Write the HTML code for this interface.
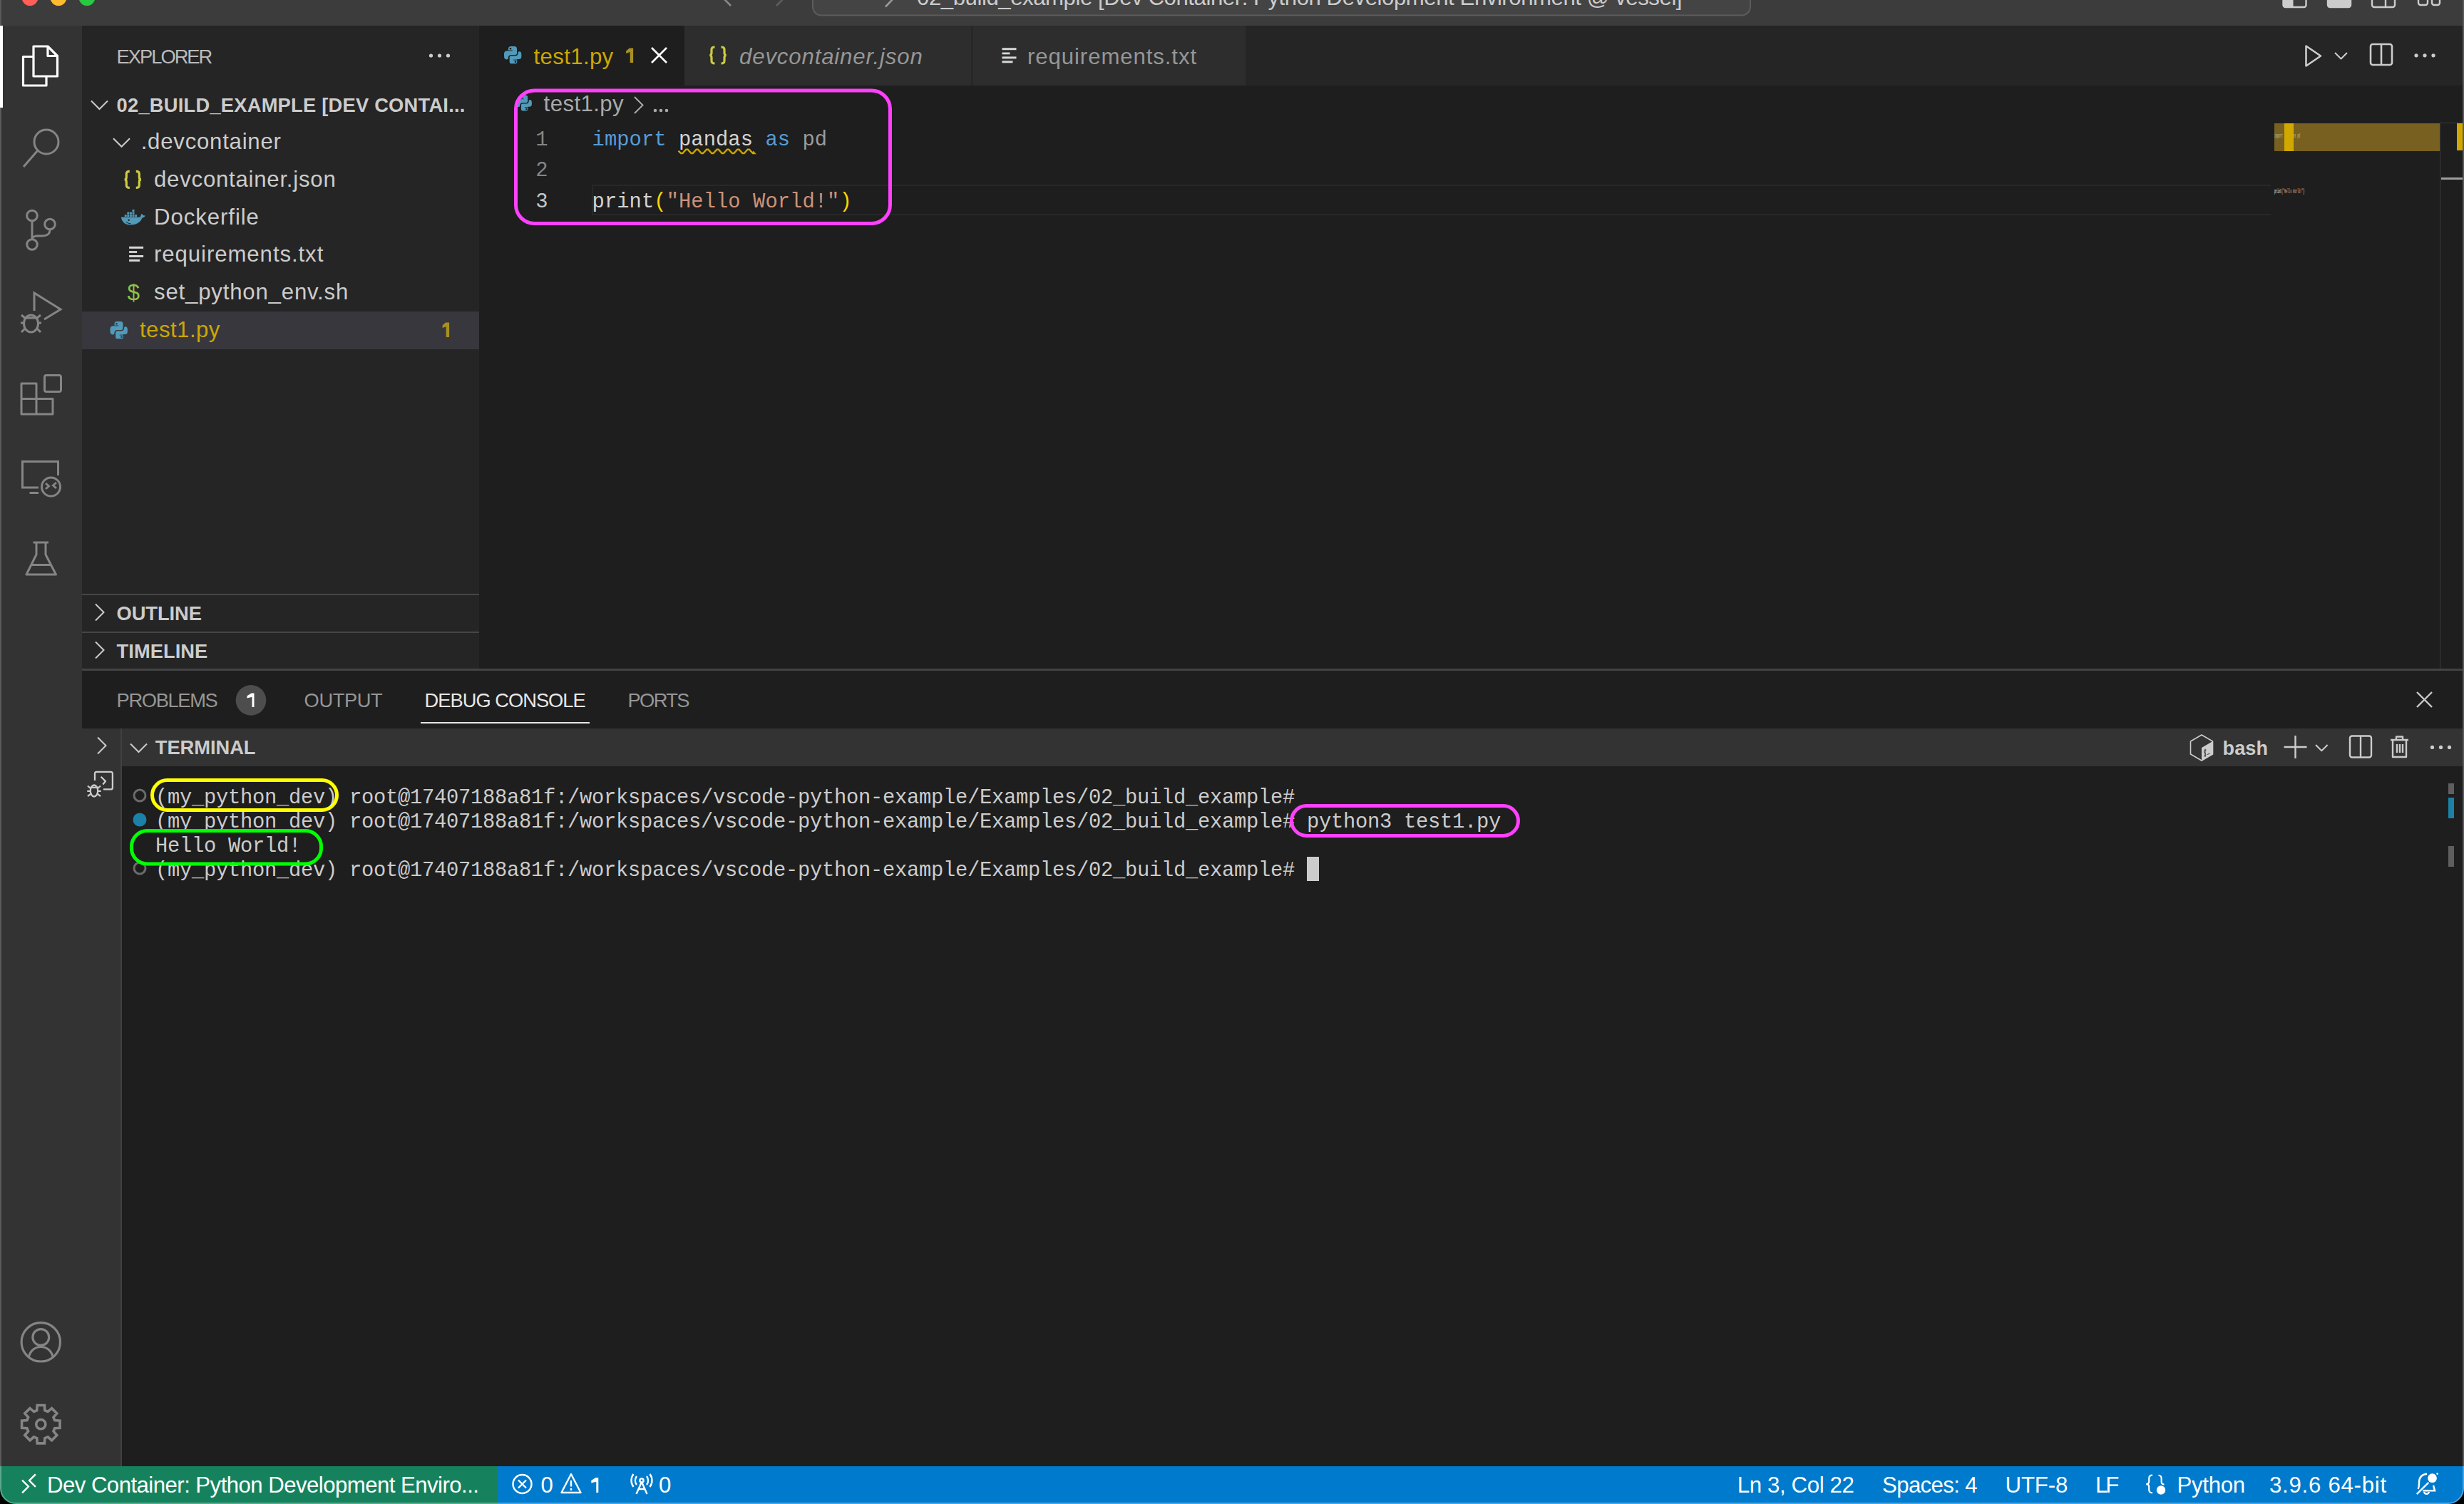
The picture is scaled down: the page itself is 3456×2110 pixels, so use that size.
<!DOCTYPE html>
<html><head><meta charset="utf-8"><style>
html,body{margin:0;padding:0;}
body{width:3456px;height:2110px;overflow:hidden;position:relative;background:#1e1e1e;font-family:'Liberation Sans', sans-serif;}
svg{position:absolute;left:0;top:0;overflow:visible}
</style></head><body>
<div style="position:absolute;left:0px;top:0px;width:3456.00px;height:36.00px;background:#3c3c3c;"></div>
<div style="position:absolute;left:0px;top:36px;width:115.00px;height:2021.20px;background:#333333;"></div>
<div style="position:absolute;left:115px;top:36px;width:557.00px;height:902.40px;background:#252526;"></div>
<div style="position:absolute;left:672px;top:36px;width:2784.00px;height:84.00px;background:#252526;"></div>
<div style="position:absolute;left:672px;top:36px;width:288.00px;height:84.00px;background:#1e1e1e;"></div>
<div style="position:absolute;left:960px;top:36px;width:401.60px;height:84.00px;background:#2d2d2d;"></div>
<div style="position:absolute;left:1363.6px;top:36px;width:383.40px;height:84.00px;background:#2d2d2d;"></div>
<div style="position:absolute;left:672px;top:120px;width:2784.00px;height:818.40px;background:#1e1e1e;"></div>
<div style="position:absolute;left:115px;top:938.4px;width:3341.00px;height:1118.80px;background:#1e1e1e;"></div>
<div style="position:absolute;left:115px;top:938.4px;width:3341.00px;height:2.40px;background:#434343;"></div>
<div style="position:absolute;left:0px;top:2057.2px;width:3456.00px;height:52.80px;background:#007acc;"></div>
<div style="position:absolute;left:0px;top:2057.2px;width:697.00px;height:52.80px;background:#16825d;"></div>
<div style="position:absolute;left:115px;top:437px;width:557.00px;height:52.80px;background:#37373d;"></div>
<div style="position:absolute;left:115px;top:833px;width:557.00px;height:2.40px;background:#464646;"></div>
<div style="position:absolute;left:115px;top:885.8px;width:557.00px;height:2.40px;background:#464646;"></div>
<div style="position:absolute;left:830px;top:259.2px;width:2370.00px;height:43.20px;background:transparent;box-sizing:border-box;border:2.4px solid #282828;"></div>
<div style="position:absolute;left:3185px;top:120px;width:237.00px;height:818.40px;background:#1e1e1e;"></div>
<div style="position:absolute;left:3190px;top:173.3px;width:232.00px;height:38.30px;background:#776020;"></div>
<div style="position:absolute;left:3204px;top:173.3px;width:12.50px;height:38.30px;background:#d1a800;"></div>
<div style="position:absolute;left:3422px;top:173px;width:1.30px;height:765.40px;background:#393939;"></div>
<div style="position:absolute;left:3422px;top:172.2px;width:34.00px;height:1.20px;background:#393939;"></div>
<div style="position:absolute;left:3446px;top:173.3px;width:10.00px;height:37.40px;background:#d1a800;"></div>
<div style="position:absolute;left:3424px;top:248.5px;width:32.00px;height:3.50px;background:#9e9e9e;"></div>
<div style="position:absolute;left:590px;top:1012.6px;width:237.00px;height:2.40px;background:#e7e7e7;"></div>
<div style="position:absolute;left:115px;top:1022.4px;width:3341.00px;height:52.40px;background:#333333;"></div>
<div style="position:absolute;left:115px;top:1074.8px;width:54.00px;height:982.40px;background:#333333;"></div>
<div style="position:absolute;left:169px;top:1022.4px;width:2.40px;height:1034.80px;background:#414141;"></div>
<div style="position:absolute;left:1833px;top:1202px;width:17.00px;height:34.00px;background:#cccccc;"></div>
<div style="position:absolute;left:3434px;top:1098.7px;width:8.00px;height:15.30px;background:#5f5f5f;"></div>
<div style="position:absolute;left:3434px;top:1119px;width:8.00px;height:29.00px;background:#1b81a8;"></div>
<div style="position:absolute;left:3434px;top:1187px;width:8.00px;height:29.00px;background:#5f5f5f;"></div>
<svg width="3456" height="2110" viewBox="0 0 3456 2110">
<circle cx="42" cy="-3.5" r="11.5" fill="#ff5f57"/>
<circle cx="82" cy="-3.5" r="11.5" fill="#febc2e"/>
<circle cx="122" cy="-3.5" r="11.5" fill="#28c840"/>
<path d="M1025 -12 L1015 -2 L1025 8" fill="none" stroke="#8a8a8a" stroke-width="2.6"/>
<path d="M1089 8 L1099 -2 L1089 -12" fill="none" stroke="#5e5e5e" stroke-width="2.6"/>
<rect x="1140" y="-30" width="1315" height="51.5" rx="12" fill="#444444" stroke="#5c5c5c" stroke-width="2"/>
<path d="M1242 9.5 L1252 -1" stroke="#9a9a9a" stroke-width="2.6"/>
<g fill="none" stroke="#cccccc" stroke-width="2.4"><rect x="3202.5" y="-20" width="32" height="30" rx="3"/><rect x="3265" y="-20" width="32" height="30" rx="3" fill="#cccccc"/><rect x="3327" y="-20" width="32" height="30" rx="3"/><path d="M3346 -20 V10"/><rect x="3392" y="-20" width="13" height="27" rx="3"/><rect x="3411" y="-20" width="11" height="27" rx="3"/></g>
<rect x="3202.5" y="-20" width="14" height="30" fill="#cccccc"/>
<g fill="none" stroke="#ffffff" stroke-width="3.2" stroke-linejoin="round"><path d="M46.5 79.5 H32.5 V120 H65 V108"/><path d="M47 65 H67 L80.5 78.5 V107 H47 Z"/><path d="M67 65 V78.5 H80.5"/></g>
<g fill="none" stroke="#858585" stroke-width="3"><circle cx="65" cy="199" r="17"/><path d="M53 211 L33 234"/></g>
<g fill="none" stroke="#858585" stroke-width="3"><circle cx="45" cy="302.5" r="7.3"/><circle cx="70" cy="314.5" r="7.3"/><circle cx="45" cy="343" r="7.3"/><path d="M45 310 V335.5"/><path d="M70 322 C70 330 64 331 58 331 H52 C48 331 45 333 45 336"/></g>
<g fill="none" stroke="#858585" stroke-width="3"><path d="M48 436 V411 L85 434 L62 448"/><ellipse cx="43.5" cy="454" rx="10" ry="12"/><path d="M34 446 H53"/><path d="M29 453 H34 M53 453 H58"/><path d="M30 442 L35 446 M57 442 L52 446 M30 466 L35 461 M57 466 L52 461"/></g>
<g fill="none" stroke="#858585" stroke-width="3" stroke-linejoin="round"><path d="M30 538 H51 V559.5 H74 V581 H30 Z"/><path d="M51 559.5 V581 M30 559.5 H51"/><rect x="62.5" y="526.5" width="23" height="23" rx="2.5"/></g>
<g fill="none" stroke="#858585" stroke-width="3"><path d="M54 684 H31.5 V647.5 H81.5 V667"/><path d="M41.5 691.5 H54"/><circle cx="71.5" cy="683" r="13"/><path d="M64 678 L68.5 682 L64 686 M79 677 L74.5 681 L79 685"/></g>
<g fill="none" stroke="#858585" stroke-width="3" stroke-linejoin="round"><path d="M46.5 761 H68"/><path d="M51 761 V778 L37 806 H78.5 L64 778 V761"/><path d="M43 792.5 H71.5"/></g>
<g fill="none" stroke="#858585" stroke-width="3.2"><circle cx="57.3" cy="1882.8" r="27.2"/><circle cx="57.3" cy="1876" r="11.4"/><path d="M40.5 1903 C43 1894.5 49.5 1889.5 57.3 1889.5 C65.1 1889.5 71.6 1894.5 74.1 1903"/></g>
<g fill="none" stroke="#858585" stroke-width="3.6" stroke-linejoin="miter"><polygon points="51.73,1978.78 52.20,1971.48 62.40,1971.48 62.87,1978.78 67.09,1980.53 72.59,1975.70 79.80,1982.91 74.97,1988.41 76.72,1992.63 84.02,1993.10 84.02,2003.30 76.72,2003.77 74.97,2007.99 79.80,2013.49 72.59,2020.70 67.09,2015.87 62.87,2017.62 62.40,2024.92 52.20,2024.92 51.73,2017.62 47.51,2015.87 42.01,2020.70 34.80,2013.49 39.63,2007.99 37.88,2003.77 30.58,2003.30 30.58,1993.10 37.88,1992.63 39.63,1988.41 34.80,1982.91 42.01,1975.70 47.51,1980.53"/><circle cx="57.3" cy="1998.2" r="6.6"/></g>
<g fill="#cccccc"><circle cx="604.5" cy="78" r="2.6"/><circle cx="616.5" cy="78" r="2.6"/><circle cx="628.5" cy="78" r="2.6"/></g>
<path d="M128 141.5 L139.5 153.0 L151 141.5" fill="none" stroke="#cccccc" stroke-width="2.0"/>
<path d="M159 194.3 L170.5 205.8 L182 194.3" fill="none" stroke="#cccccc" stroke-width="2.0"/>
<path transform="translate(173.8,238.9) scale(1,1)" d="M8 1.5 Q3.5 1.5 3.5 5 V9.5 Q3.5 13 0.8 13 Q3.5 13 3.5 16.5 V21 Q3.5 24.5 8 24.5" fill="none" stroke="#cbcb41" stroke-width="3.2"/><path transform="translate(198.8,238.9) scale(-1,1)" d="M8 1.5 Q3.5 1.5 3.5 5 V9.5 Q3.5 13 0.8 13 Q3.5 13 3.5 16.5 V21 Q3.5 24.5 8 24.5" fill="none" stroke="#cbcb41" stroke-width="3.2"/>
<g transform="translate(169.7,294)" fill="#519aba"><rect x="5" y="7.2" width="3" height="3"/><rect x="8.6" y="7.2" width="3" height="3"/><rect x="12.2" y="7.2" width="3" height="3"/><rect x="15.8" y="7.2" width="3" height="3"/><rect x="19.4" y="7.2" width="3" height="3"/><rect x="8.6" y="3.6" width="3" height="3"/><rect x="12.2" y="3.6" width="3" height="3"/><rect x="15.8" y="3.6" width="3" height="3"/><rect x="15.8" y="0" width="3" height="3"/><path d="M0 10.8 H26.5 Q28 9 28.5 6 Q31 7 32 8.5 Q34 8 34 9 Q32.5 11 30 11.5 Q26 21.5 13 21.5 Q2 21.5 0 10.8 Z"/><circle cx="11" cy="14.8" r="1.2" fill="#252526"/><path d="M7 17.5 Q10 19.5 14 20" stroke="#252526" stroke-width="1" fill="none"/></g>
<g fill="#d4d7d6"><rect x="181.1" y="345.8" width="20" height="3"/><rect x="181.1" y="352.1" width="11" height="2.8"/><rect x="181.1" y="358.0" width="20" height="3"/><rect x="181.1" y="363.90000000000003" width="15" height="3"/></g>
<g transform="translate(154.5,451) scale(1.0)"><path d="M6 6.3 V3.6 Q6 0 9.6 0 H14.6 Q18 0 18 3.6 V9.2 Q18 12.4 14.8 12.4 H9.4 Q6 12.4 6 15.8 V16.2 Q6 18.4 3.6 18.4 Q0 18.4 0 13.5 V10.8 Q0 6.3 4.4 6.3 Z" fill="#519aba"/><path d="M6 6.3 V3.6 Q6 0 9.6 0 H14.6 Q18 0 18 3.6 V9.2 Q18 12.4 14.8 12.4 H9.4 Q6 12.4 6 15.8 V16.2 Q6 18.4 3.6 18.4 Q0 18.4 0 13.5 V10.8 Q0 6.3 4.4 6.3 Z" transform="rotate(180 12.5 12.5)" fill="#519aba" stroke="#37373d" stroke-width="1.3"/><path d="M6 5.9 H11.8 M13.2 19.1 H19" stroke="#37373d" stroke-width="0.9"/><circle cx="9" cy="3.2" r="1.3" fill="#37373d"/><circle cx="16" cy="21.8" r="1.3" fill="#37373d"/></g>
<path d="M630.10 452.60 L630.10 473.10 L625.70 473.10 L625.70 458.14 L620.60 459.98 L620.60 456.50 L624.90 452.60 Z" fill="#a89020"/>
<path d="M134 847.5 L145.5 859 L134 870.5" fill="none" stroke="#cccccc" stroke-width="2"/>
<path d="M134 900.5 L145.5 912 L134 923.5" fill="none" stroke="#cccccc" stroke-width="2"/>
<g transform="translate(707,65) scale(1.0)"><path d="M6 6.3 V3.6 Q6 0 9.6 0 H14.6 Q18 0 18 3.6 V9.2 Q18 12.4 14.8 12.4 H9.4 Q6 12.4 6 15.8 V16.2 Q6 18.4 3.6 18.4 Q0 18.4 0 13.5 V10.8 Q0 6.3 4.4 6.3 Z" fill="#519aba"/><path d="M6 6.3 V3.6 Q6 0 9.6 0 H14.6 Q18 0 18 3.6 V9.2 Q18 12.4 14.8 12.4 H9.4 Q6 12.4 6 15.8 V16.2 Q6 18.4 3.6 18.4 Q0 18.4 0 13.5 V10.8 Q0 6.3 4.4 6.3 Z" transform="rotate(180 12.5 12.5)" fill="#519aba" stroke="#1e1e1e" stroke-width="1.3"/><path d="M6 5.9 H11.8 M13.2 19.1 H19" stroke="#1e1e1e" stroke-width="0.9"/><circle cx="9" cy="3.2" r="1.3" fill="#1e1e1e"/><circle cx="16" cy="21.8" r="1.3" fill="#1e1e1e"/></g>
<path d="M888.10 67.60 L888.10 88.00 L883.70 88.00 L883.70 73.11 L878.10 74.94 L878.10 71.48 L882.90 67.60 Z" fill="#a89020"/>
<path d="M914 67 L935 88 M935 67 L914 88" stroke="#ffffff" stroke-width="2.6"/>
<path transform="translate(994.5,64.5) scale(1,1)" d="M8 1.5 Q3.5 1.5 3.5 5 V9.5 Q3.5 13 0.8 13 Q3.5 13 3.5 16.5 V21 Q3.5 24.5 8 24.5" fill="none" stroke="#cbcb41" stroke-width="3.2"/><path transform="translate(1019.5,64.5) scale(-1,1)" d="M8 1.5 Q3.5 1.5 3.5 5 V9.5 Q3.5 13 0.8 13 Q3.5 13 3.5 16.5 V21 Q3.5 24.5 8 24.5" fill="none" stroke="#cbcb41" stroke-width="3.2"/>
<g fill="#d4d7d6"><rect x="1405.5" y="67.2" width="20" height="3"/><rect x="1405.5" y="73.5" width="11" height="2.8"/><rect x="1405.5" y="79.4" width="20" height="3"/><rect x="1405.5" y="85.30000000000001" width="15" height="3"/></g>
<g fill="none" stroke="#cccccc" stroke-width="2.6" stroke-linejoin="round"><path d="M3234.5 64.5 V92.5 L3255 78.5 Z"/><path d="M3275 74 L3283.5 82.5 L3292 74" stroke-width="2"/><rect x="3325" y="62" width="30" height="29" rx="3"/><path d="M3340 62 V91"/></g>
<g fill="#cccccc"><circle cx="3389" cy="77.8" r="2.6"/><circle cx="3401" cy="77.8" r="2.6"/><circle cx="3413" cy="77.8" r="2.6"/></g>
<g transform="translate(724,133.5) scale(0.9)"><path d="M6 6.3 V3.6 Q6 0 9.6 0 H14.6 Q18 0 18 3.6 V9.2 Q18 12.4 14.8 12.4 H9.4 Q6 12.4 6 15.8 V16.2 Q6 18.4 3.6 18.4 Q0 18.4 0 13.5 V10.8 Q0 6.3 4.4 6.3 Z" fill="#519aba"/><path d="M6 6.3 V3.6 Q6 0 9.6 0 H14.6 Q18 0 18 3.6 V9.2 Q18 12.4 14.8 12.4 H9.4 Q6 12.4 6 15.8 V16.2 Q6 18.4 3.6 18.4 Q0 18.4 0 13.5 V10.8 Q0 6.3 4.4 6.3 Z" transform="rotate(180 12.5 12.5)" fill="#519aba" stroke="#1e1e1e" stroke-width="1.3"/><path d="M6 5.9 H11.8 M13.2 19.1 H19" stroke="#1e1e1e" stroke-width="0.9"/><circle cx="9" cy="3.2" r="1.3" fill="#1e1e1e"/><circle cx="16" cy="21.8" r="1.3" fill="#1e1e1e"/></g>
<path d="M890 136 L901.5 147.5 L890 159" fill="none" stroke="#a9a9a9" stroke-width="2"/>
<g fill="#a9a9a9"><circle cx="919" cy="155" r="2.3"/><circle cx="927" cy="155" r="2.3"/><circle cx="935" cy="155" r="2.3"/></g>
<path d="M951.50 211.60 L955.00 215.00 L957.40 215.00 L962.20 209.80 L964.60 209.80 L969.40 215.00 L971.80 215.00 L976.60 209.80 L979.00 209.80 L983.80 215.00 L986.20 215.00 L991.00 209.80 L993.40 209.80 L998.20 215.00 L1000.60 215.00 L1005.40 209.80 L1007.80 209.80 L1012.60 215.00 L1015.00 215.00 L1019.80 209.80 L1022.20 209.80 L1027.00 215.00 L1029.40 215.00 L1034.20 209.80 L1036.60 209.80 L1041.40 215.00 L1043.80 215.00 L1048.60 209.80 L1051.00 209.80 L1055.80 215.00 L1058.20 215.00 L1056.00 212.50" fill="none" stroke="#cca700" stroke-width="2.4" stroke-linejoin="miter"/>
<rect x="723.5" y="127" width="525" height="186.5" rx="26" fill="none" stroke="#ff40ff" stroke-width="5"/>
<circle cx="352" cy="982.4" r="21.3" fill="#4d4d4d"/>
<path d="M356.50 972.50 L356.50 992.00 L353.50 992.00 L353.50 977.76 L346.50 979.52 L346.50 976.21 L352.70 972.50 Z" fill="#ffffff"/>
<path d="M3390 971 L3411 992 M3411 971 L3390 992" stroke="#cccccc" stroke-width="2.4"/>
<path d="M137 1034.5 L148.5 1046 L137 1057.5" fill="none" stroke="#cccccc" stroke-width="2"/>
<path d="M183 1043.5 L194.5 1055.0 L206 1043.5" fill="none" stroke="#cccccc" stroke-width="2.0"/>
<g fill="none" stroke="#cccccc" stroke-width="2.4" stroke-linejoin="round"><path d="M3219.5 1032 V1064 M3203.5 1048 H3235.5"/><path d="M3248 1045 L3256.3 1053.3 L3264.6 1045" stroke-width="2"/><rect x="3296" y="1032.5" width="30" height="30" rx="3"/><path d="M3311 1032.5 V1062.5"/><path d="M3353 1038 H3378 M3361 1038 V1033.5 H3370 V1038 M3356 1038 V1062 H3375 V1038 M3362 1044 V1056 M3366 1044 V1056 M3370 1044 V1056"/></g>
<g fill="#cccccc"><circle cx="3411.5" cy="1048.4" r="2.6"/><circle cx="3423.5" cy="1048.4" r="2.6"/><circle cx="3435.5" cy="1048.4" r="2.6"/></g>
<g><path d="M3088 1031 L3103.5 1040 V1058 L3088 1067 L3072.5 1058 V1040 Z" fill="none" stroke="#cccccc" stroke-width="1.6"/><path d="M3103.5 1040 V1058 L3088 1067 V1049 Z" fill="#cccccc"/><path d="M3094.5 1052 Q3091.5 1051.5 3091.5 1054.5 Q3091.5 1056.5 3093 1057 Q3094.5 1058 3093.5 1060 Q3092.5 1061 3091 1060.5 M3093 1050.5 V1062 M3096 1058.5 L3099.5 1057" fill="none" stroke="#333333" stroke-width="1"/></g>
<g fill="none" stroke="#cccccc" stroke-width="2.3" stroke-linejoin="round"><path d="M133 1095 V1085.3 Q133 1082.8 135.5 1082.8 H155.4 Q157.9 1082.8 157.9 1085.3 V1104.9 Q157.9 1107.4 155.4 1107.4 H145"/><path d="M141.6 1089.8 L148 1096.1 L144.3 1100.5"/><ellipse cx="132" cy="1109.5" rx="5.2" ry="8"/><path d="M127 1104.8 H137"/><path d="M123 1102.5 L127 1106 M141 1102.5 L137 1106 M122.3 1109.8 H126.8 M137.2 1109.8 H141.7 M123 1117.2 L127 1113.8 M141 1117.2 L137 1113.8"/></g>
<circle cx="196" cy="1116" r="8" fill="none" stroke="#6b6b6b" stroke-width="3"/>
<circle cx="196" cy="1150" r="9.5" fill="#1b81a8"/>
<circle cx="196" cy="1218" r="8" fill="none" stroke="#6b6b6b" stroke-width="3"/>
<path d="M31.1 2076.7 L39.9 2085.5 L31.1 2094.3 M49.9 2068.4 L41.1 2077.1 L49.9 2085.9" fill="none" stroke="#ffffff" stroke-width="2.4"/>
<g fill="none" stroke="#ffffff" stroke-width="2.4"><circle cx="732.5" cy="2082" r="13"/><path d="M727 2076.5 L738 2087.5 M738 2076.5 L727 2087.5"/><path d="M801 2068 L787.5 2094 H814.5 Z" stroke-linejoin="round"/><path d="M801 2077 V2085.5 M801 2088 V2091"/><path d="M900 2079 L892.5 2096 M900 2079 L907.5 2096 M895 2089 H905"/><circle cx="900" cy="2077" r="2.6"/><path d="M893 2071 A10 10 0 0 0 893 2083 M907 2071 A10 10 0 0 1 907 2083 M888.5 2068 A15 15 0 0 0 888.5 2086 M911.5 2068 A15 15 0 0 1 911.5 2086"/></g>
<path d="M839.30 2073.00 L839.30 2094.00 L836.30 2094.00 L836.30 2078.67 L829.30 2080.56 L829.30 2076.99 L835.50 2073.00 Z" fill="#ffffff"/>
<g fill="none" stroke="#ffffff" stroke-width="2.1"><path d="M3019 2069.6 Q3014.2 2069.6 3014.2 2074 V2078.5 Q3014.2 2082 3010.2 2082.1 Q3014.2 2082.3 3014.2 2085.7 V2090 Q3014.2 2094.4 3019 2094.4"/><path d="M3027.5 2069.8 Q3031.6 2070 3031.6 2074.5 V2078.8 Q3031.6 2082.4 3035.5 2082.7"/></g><circle cx="3031" cy="2090.5" r="6.2" fill="#ffffff"/>
<g fill="none" stroke="#ffffff" stroke-width="2.4"><path d="M3404 2067.8 C3397 2068.5 3393 2073 3393 2080 C3393 2084 3393 2086.5 3391.5 2088.8"/><path d="M3389.8 2096.2 L3406.3 2079.9"/><path d="M3413 2083.9 L3415.1 2091.3 H3398.3"/><path d="M3400 2093 A3.6 3.6 0 0 0 3407 2093"/></g><circle cx="3411.5" cy="2073.7" r="6.4" fill="#ffffff"/><circle cx="3418.6" cy="2067.6" r="1.3" fill="#ffffff"/>
</svg>
<div style="position:absolute;left:1286.00px;top:-19.54px;font-family:'Liberation Sans', sans-serif;font-size:31.2px;line-height:1.1172;color:#cccccc;white-space:pre;letter-spacing:-0.458px;">02_build_example [Dev Container: Python Development Environment @ vessel]</div>
<div style="position:absolute;left:163.60px;top:64.59px;font-family:'Liberation Sans', sans-serif;font-size:27.3px;line-height:1.1172;color:#bbbbbb;white-space:pre;letter-spacing:-2.000px;">EXPLORER</div>
<div style="position:absolute;left:163.60px;top:132.69px;font-family:'Liberation Sans', sans-serif;font-size:27.3px;line-height:1.1172;color:#cccccc;white-space:pre;font-weight:700;letter-spacing:0.233px;">02_BUILD_EXAMPLE [DEV CONTAI...</div>
<div style="position:absolute;left:197.70px;top:181.96px;font-family:'Liberation Sans', sans-serif;font-size:31.2px;line-height:1.1172;color:#cccccc;white-space:pre;letter-spacing:0.750px;">.devcontainer</div>
<div style="position:absolute;left:216.00px;top:234.76px;font-family:'Liberation Sans', sans-serif;font-size:31.2px;line-height:1.1172;color:#cccccc;white-space:pre;letter-spacing:0.750px;">devcontainer.json</div>
<div style="position:absolute;left:216.00px;top:287.56px;font-family:'Liberation Sans', sans-serif;font-size:31.2px;line-height:1.1172;color:#cccccc;white-space:pre;letter-spacing:0.922px;">Dockerfile</div>
<div style="position:absolute;left:216.00px;top:340.36px;font-family:'Liberation Sans', sans-serif;font-size:31.2px;line-height:1.1172;color:#cccccc;white-space:pre;letter-spacing:0.913px;">requirements.txt</div>
<div style="position:absolute;left:178.40px;top:392.88px;font-family:'Liberation Sans', sans-serif;font-size:31.5px;line-height:1.1172;color:#8dc149;white-space:pre;">$</div>
<div style="position:absolute;left:216.00px;top:393.16px;font-family:'Liberation Sans', sans-serif;font-size:31.2px;line-height:1.1172;color:#cccccc;white-space:pre;letter-spacing:0.800px;">set_python_env.sh</div>
<div style="position:absolute;left:196.00px;top:445.96px;font-family:'Liberation Sans', sans-serif;font-size:31.2px;line-height:1.1172;color:#cca700;white-space:pre;letter-spacing:0.457px;">test1.py</div>
<div style="position:absolute;left:163.60px;top:846.29px;font-family:'Liberation Sans', sans-serif;font-size:27.3px;line-height:1.1172;color:#cccccc;white-space:pre;font-weight:700;letter-spacing:-0.083px;">OUTLINE</div>
<div style="position:absolute;left:163.60px;top:899.39px;font-family:'Liberation Sans', sans-serif;font-size:27.3px;line-height:1.1172;color:#cccccc;white-space:pre;font-weight:700;letter-spacing:0.043px;">TIMELINE</div>
<div style="position:absolute;left:748.50px;top:62.86px;font-family:'Liberation Sans', sans-serif;font-size:31.2px;line-height:1.1172;color:#cca700;white-space:pre;letter-spacing:0.357px;">test1.py</div>
<div style="position:absolute;left:1037.00px;top:62.86px;font-family:'Liberation Sans', sans-serif;font-size:31.2px;line-height:1.1172;color:#969696;white-space:pre;font-style:italic;letter-spacing:0.844px;">devcontainer.json</div>
<div style="position:absolute;left:1441.00px;top:62.86px;font-family:'Liberation Sans', sans-serif;font-size:31.2px;line-height:1.1172;color:#969696;white-space:pre;letter-spacing:0.900px;">requirements.txt</div>
<div style="position:absolute;left:762.60px;top:129.16px;font-family:'Liberation Sans', sans-serif;font-size:31.2px;line-height:1.1172;color:#a9a9a9;white-space:pre;letter-spacing:0.400px;">test1.py</div>
<div style="position:absolute;left:751.16px;top:181.22px;font-family:'Liberation Mono', monospace;font-size:28.8px;line-height:1.1328;white-space:pre;letter-spacing:0.060px"><span style="color:#858585">1</span></div>
<div style="position:absolute;left:751.16px;top:224.42px;font-family:'Liberation Mono', monospace;font-size:28.8px;line-height:1.1328;white-space:pre;letter-spacing:0.060px"><span style="color:#858585">2</span></div>
<div style="position:absolute;left:751.16px;top:267.62px;font-family:'Liberation Mono', monospace;font-size:28.8px;line-height:1.1328;white-space:pre;letter-spacing:0.060px"><span style="color:#c6c6c6">3</span></div>
<div style="position:absolute;left:830.6px;top:181.22px;font-family:'Liberation Mono', monospace;font-size:28.8px;line-height:1.1328;white-space:pre;letter-spacing:0.060px"><span style="color:#569cd6">import</span><span style="color:#d4d4d4"> </span><span style="color:#d4d4d4">pandas</span><span style="color:#d4d4d4"> </span><span style="color:#569cd6">as</span><span style="color:#9b9b9b"> pd</span></div>
<div style="position:absolute;left:830.6px;top:267.62px;font-family:'Liberation Mono', monospace;font-size:28.8px;line-height:1.1328;white-space:pre;letter-spacing:0.060px"><span style="color:#d4d4d4">print</span><span style="color:#ffd700">(</span><span style="color:#ce9178">"Hello World!"</span><span style="color:#ffd700">)</span></div>
<div style="position:absolute;left:3190px;top:187.10px;font-family:'Liberation Mono', monospace;font-size:8.6px;line-height:9px;white-space:pre;transform:scaleX(0.39);transform-origin:0 0;font-weight:700"><span style="color:#a9a37a">import</span><span style="color:#000">       </span><span style="color:#a9a37a">as pd</span></div>
<div style="position:absolute;left:3190px;top:264.90px;font-family:'Liberation Mono', monospace;font-size:8.6px;line-height:9px;white-space:pre;transform:scaleX(0.39);transform-origin:0 0;font-weight:700"><span style="color:#c8c8c8">print</span><span style="color:#c8a030">(</span><span style="color:#b9866a">"Hello World!"</span><span style="color:#c8c8c8">)</span></div>
<div style="position:absolute;left:163.60px;top:968.29px;font-family:'Liberation Sans', sans-serif;font-size:27.3px;line-height:1.1172;color:#969696;white-space:pre;letter-spacing:-1.357px;">PROBLEMS</div>
<div style="position:absolute;left:426.60px;top:968.29px;font-family:'Liberation Sans', sans-serif;font-size:27.3px;line-height:1.1172;color:#969696;white-space:pre;letter-spacing:-0.440px;">OUTPUT</div>
<div style="position:absolute;left:595.60px;top:968.29px;font-family:'Liberation Sans', sans-serif;font-size:27.3px;line-height:1.1172;color:#e7e7e7;white-space:pre;letter-spacing:-1.000px;">DEBUG CONSOLE</div>
<div style="position:absolute;left:880.40px;top:968.29px;font-family:'Liberation Sans', sans-serif;font-size:27.3px;line-height:1.1172;color:#969696;white-space:pre;letter-spacing:-1.600px;">PORTS</div>
<div style="position:absolute;left:217.80px;top:1033.69px;font-family:'Liberation Sans', sans-serif;font-size:27.3px;line-height:1.1172;color:#cccccc;white-space:pre;font-weight:700;letter-spacing:-0.043px;">TERMINAL</div>
<div style="position:absolute;left:3117.50px;top:1034.96px;font-family:'Liberation Sans', sans-serif;font-size:27px;line-height:1.1172;color:#cccccc;white-space:pre;font-weight:700;letter-spacing:0.167px;">bash</div>
<div style="position:absolute;left:218px;top:1104.22px;font-family:'Liberation Mono', monospace;font-size:28.8px;line-height:1.1328;white-space:pre;letter-spacing:-0.280px"><span style="color:#cccccc">(my_python_dev) root@17407188a81f:/workspaces/vscode-python-example/Examples/02_build_example#</span></div>
<div style="position:absolute;left:218px;top:1138.22px;font-family:'Liberation Mono', monospace;font-size:28.8px;line-height:1.1328;white-space:pre;letter-spacing:-0.280px"><span style="color:#cccccc">(my_python_dev) root@17407188a81f:/workspaces/vscode-python-example/Examples/02_build_example# python3 test1.py</span></div>
<div style="position:absolute;left:218px;top:1172.22px;font-family:'Liberation Mono', monospace;font-size:28.8px;line-height:1.1328;white-space:pre;letter-spacing:-0.280px"><span style="color:#cccccc">Hello World!</span></div>
<div style="position:absolute;left:218px;top:1206.22px;font-family:'Liberation Mono', monospace;font-size:28.8px;line-height:1.1328;white-space:pre;letter-spacing:-0.280px"><span style="color:#cccccc">(my_python_dev) root@17407188a81f:/workspaces/vscode-python-example/Examples/02_build_example#</span></div>
<div style="position:absolute;left:66.00px;top:2067.16px;font-family:'Liberation Sans', sans-serif;font-size:31.2px;line-height:1.1172;color:#ffffff;white-space:pre;letter-spacing:-0.555px;">Dev Container: Python Development Enviro...</div>
<div style="position:absolute;left:758.60px;top:2067.16px;font-family:'Liberation Sans', sans-serif;font-size:31.2px;line-height:1.1172;color:#ffffff;white-space:pre;">0</div>
<div style="position:absolute;left:924.00px;top:2067.16px;font-family:'Liberation Sans', sans-serif;font-size:31.2px;line-height:1.1172;color:#ffffff;white-space:pre;">0</div>
<div style="position:absolute;left:2436.70px;top:2067.16px;font-family:'Liberation Sans', sans-serif;font-size:31.2px;line-height:1.1172;color:#ffffff;white-space:pre;letter-spacing:-0.364px;">Ln 3, Col 22</div>
<div style="position:absolute;left:2640.00px;top:2067.16px;font-family:'Liberation Sans', sans-serif;font-size:31.2px;line-height:1.1172;color:#ffffff;white-space:pre;letter-spacing:-0.625px;">Spaces: 4</div>
<div style="position:absolute;left:2812.60px;top:2067.16px;font-family:'Liberation Sans', sans-serif;font-size:31.2px;line-height:1.1172;color:#ffffff;white-space:pre;letter-spacing:-0.150px;">UTF-8</div>
<div style="position:absolute;left:2939.00px;top:2067.16px;font-family:'Liberation Sans', sans-serif;font-size:31.2px;line-height:1.1172;color:#ffffff;white-space:pre;letter-spacing:-3.000px;">LF</div>
<div style="position:absolute;left:3053.50px;top:2067.16px;font-family:'Liberation Sans', sans-serif;font-size:31.2px;line-height:1.1172;color:#ffffff;white-space:pre;letter-spacing:-0.300px;">Python</div>
<div style="position:absolute;left:3183.00px;top:2067.16px;font-family:'Liberation Sans', sans-serif;font-size:31.2px;line-height:1.1172;color:#ffffff;white-space:pre;letter-spacing:0.727px;">3.9.6 64-bit</div>
<svg width="3456" height="2110" viewBox="0 0 3456 2110">
<rect x="213.5" y="1094.5" width="259" height="42" rx="21" fill="none" stroke="#ffff00" stroke-width="5"/>
<rect x="1811.5" y="1130.5" width="318" height="42" rx="21" fill="none" stroke="#ff40ff" stroke-width="5"/>
<rect x="184.5" y="1165.5" width="266" height="46.5" rx="22" fill="none" stroke="#00ff00" stroke-width="5"/>
</svg>
<div style="position:absolute;left:0;top:0;width:2px;height:2057px;background:#5a5a5a"></div>
<div style="position:absolute;left:0;top:36px;width:4px;height:115px;background:#ffffff"></div>
<svg width="3456" height="2110" style="position:absolute;left:0;top:0"><path d="M0 2088 A22 22 0 0 0 22 2110 H0 Z" fill="#000"/><path d="M3456 2088 A22 22 0 0 1 3434 2110 H3456 Z" fill="#000"/><path d="M1 2057 V2088 A21 21 0 0 0 22 2109 H3434 A21 21 0 0 0 3455 2088 V2057" fill="none" stroke="rgba(255,255,255,0.3)" stroke-width="2"/></svg>
<div style="position:absolute;left:3453.5px;top:0;width:2.5px;height:2057px;background:#5a5a5a"></div>
</body></html>
